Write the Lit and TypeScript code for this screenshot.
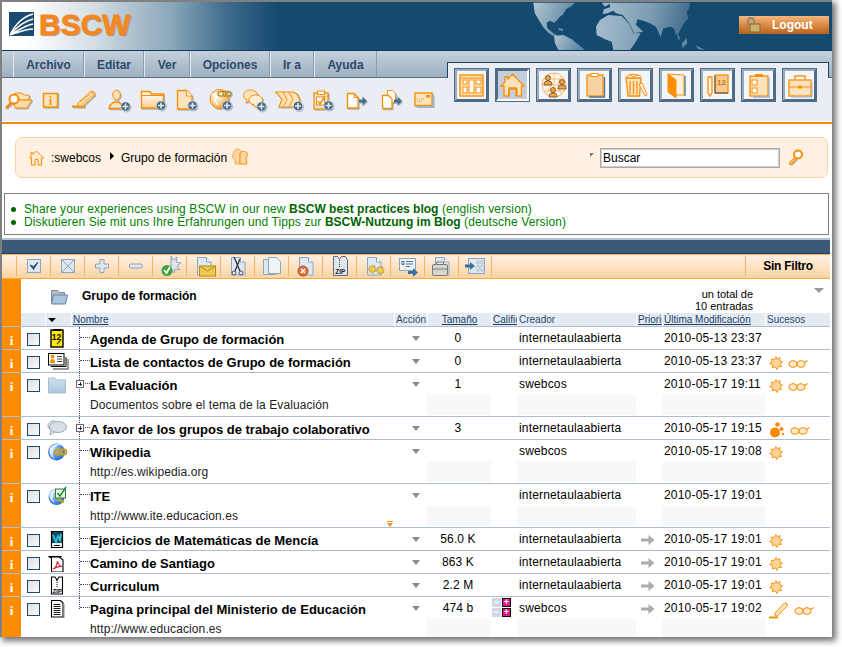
import {LitElement, css, html, svg} from 'lit';
import {customElement} from 'lit/decorators.js';

const O = '#f98f06';
const C = '#fde3bd';
const B = '#8ea4bc';
const P = '#dfe7f0';

const ic = (w: number, h: number, body: unknown) =>
  html`<svg width=${w} height=${h} viewBox="0 0 ${w} ${h}">${body}</svg>`;

const plus = (x: number, y: number) => svg`
  <circle cx=${x} cy=${y} r="4.6" fill="#46677f" stroke="#dbe3ec" stroke-width=".6"/>
  <path d="M${x - 3} ${y}h6M${x} ${y - 3}v6" stroke="#dfe8f0" stroke-width="1.6"/>`;

const arrow = (x: number, y: number) => svg`
  <path d="M${x} ${y - 1.5}h3.5v-3l4.5 4.5-4.5 4.5v-3h-3.5z" fill="#4a7088"/>`;

const chain = (x: number, y: number) => svg`
  <g fill="none" stroke="#b8942a" stroke-width="1.5">
    <rect x=${x} y=${y} width="8" height="4.5" rx="2.2"/>
    <rect x=${x + 5} y=${y} width="8" height="4.5" rx="2.2"/>
  </g>`;

const star = (c: string, f: string) => svg`
  <path d="M6.500 0l1.300 2.500L10.500 1l-.4 3L13 5.500l-2.400 1.600L12 10l-3-.2L7.500 13 5.800 10.300 2.800 11.500l.3-3.200L0 7l2.700-1.500L1.800 2.600l3 .4z" fill=${f} stroke=${c} stroke-width=".9"/>`;

const topIcons = [
  svg`<path d="M13 5h7l2 2h5v5H13z" fill=${C} stroke=${O}/>
    <path d="M11 12h19l-5 8H13z" fill="#fbd9a8" stroke=${O}/>
    <path d="M9 15l-5 5" stroke=${O} stroke-width="2.600"/>
    <circle cx="12" cy="11" r="4.500" fill="#fff" stroke=${O} stroke-width="2"/>`,
  svg`<rect x="7.500" y="5.500" width="14" height="13.500" fill=${C} stroke=${O} stroke-width="1.500"/>
    <text x="14.500" y="16.500" font-family="Liberation Serif" font-weight="700" font-size="12" text-anchor="middle" fill=${O}>i</text>`,
  svg`<path d="M8 15L21 3l3 1 1 3-13 12H8z" fill=${C} stroke=${O}/>
    <path d="M10 14L23 4M11 17L24 6" stroke=${O} stroke-width=".8"/>
    <path d="M2 18.500h13" stroke=${O} stroke-width="2"/>`,
  svg`<ellipse cx="12.500" cy="7" rx="3.800" ry="4.800" fill=${C} stroke=${O}/>
    <path d="M5 20.500c0-4 3-4.500 5-6.500h5c1 3 5 2 5 6.500z" fill=${C} stroke=${O} stroke-width="1.300"/>${plus(21.5, 18.5)}`,
  svg`<path d="M3.500 6V3.500h8l2 2.500h12v14h-22z" fill="url(#fg)" stroke=${O} stroke-width="1.300"/>
    <path d="M3.500 7.500h22" stroke=${O}/>${plus(23, 17.5)}`,
  svg`<path d="M5.500 2.500h9l5.500 5.500v13H5.500z" fill=${C} stroke=${O} stroke-width="1.300"/>
    <path d="M14.500 2.500V8H20" fill="#fff" stroke=${O}/>${plus(20.5, 17.5)}`,
  svg`<circle cx="13.500" cy="11" r="9.500" fill="url(#gl)" stroke=${O}/>
    <path d="M6 6l5 2-2 5 3 4M17 3l-2 5" stroke="#fff" stroke-width="1.500" fill="none"/>
    ${chain(12, 3.5)}${plus(21, 17.5)}`,
  svg`<path d="M10.500 2C6 2 3.500 4.500 3.500 7.500c0 2 1.500 3.500 3 4.200L6 15l4-2.700c4 0 7.500-2 7.500-4.800S15 2 10.500 2z" fill=${C} stroke=${O}/>
    <path d="M15.500 7C11.500 7 9 9.500 9 12c0 2.500 2 4.500 5 4.700l2 3.300 1.500-3c3.500-.5 5-2.500 5-5 0-2.800-3-5-7-5z" fill="#feecd4" stroke=${O}/>${plus(21.5, 18.5)}`,
  svg`<path d="M2 4h17l4 2 3 6-3 7H5l3-7.500z" fill=${C} stroke=${O} stroke-width="1.200"/>
    <path d="M9 4l4 7.500-4 7.500M15 4l4 7.500-4 7.500" fill="none" stroke=${O}/>${plus(24, 18)}`,
  svg`<rect x="6" y="5" width="14" height="16" fill=${C} stroke=${O} stroke-width="1.300"/>
    <rect x="9.500" y="3" width="7" height="3.500" fill="#fff" stroke=${O}/>
    <rect x="8.500" y="9" width="8" height="8" fill="#fff" stroke="#c98a3a"/>
    <path d="M10 13l2 3 5-8" fill="none" stroke=${O} stroke-width="1.600"/>${plus(20.5, 17.5)}`,
  svg`<path d="M5.500 5.500h6.500l4 4v10.500H5.500z" fill="#fff" stroke=${O} stroke-width="1.300"/>
    <path d="M12 5.500v4h4" fill="none" stroke=${O}/>${arrow(17, 13)}`,
  svg`<path d="M11.500 2.500h5l3 3v9h-8z" fill="#fff" stroke=${O}/>
    <path d="M6.500 7.500h6l3.500 3.500v9.500H6.500z" fill="#fff" stroke=${O} stroke-width="1.300"/>${arrow(18, 13)}`,
  svg`<rect x="5" y="5" width="17" height="12.500" fill=${C} stroke=${O} stroke-width="1.400"/>
    <rect x="16" y="7" width="4" height="2.500" fill=${O}/>
    <path d="M7 11h8M7 13.500h6" stroke="#e0a050" stroke-dasharray="1 1"/>
    <path d="M6 18.500h17V7" fill="none" stroke="#9fb0c4" stroke-width="1.200"/>`,
];

const tabs = [
  svg`<rect x="2" y="3" width="23" height="21" fill=${C} stroke=${O} stroke-width="1.400"/>
    <path d="M2 6h23" stroke=${O}/>
    <g fill="#fff" stroke=${O}><rect x="5" y="8" width="4" height="4"/><rect x="5" y="15" width="4" height="6"/><rect x="11" y="8" width="5" height="13"/><rect x="18" y="8" width="5" height="4"/><rect x="18" y="15" width="5" height="6"/></g>`,
  svg`<path d="M13.500 2L25 14h-2.500v10H18v-7H10v7H5V14H2l4-4V5h3v2z" fill=${C} stroke=${O} stroke-width="1.300"/>
    <path d="M10 24v-8h7v8" fill="none" stroke=${O} stroke-width="1.500"/>`,
  svg`<circle cx="14" cy="13" r="12" fill="#fef4e6" stroke="#f5b66e"/>
    <path d="M2 13h24M14 1v24M6 4c5 6 5 13 0 18M22 4c-5 6-5 13 0 18M4 7h20M4 19h20" fill="none" stroke="#f5b66e" stroke-width=".8"/>
    <g fill="#f4a24a" stroke="#6a4a20" stroke-width=".8">
      <circle cx="8" cy="6" r="2.500"/><path d="M4 13c0-3 1-4 4-4s4 1 4 4z"/>
      <circle cx="22" cy="10" r="2.500"/><path d="M18 17c0-3 1-4 4-4s4 1 4 4z"/>
      <circle cx="13" cy="18" r="2.500"/><path d="M9 25c0-3 1-4 4-4s4 1 4 4z"/>
    </g>`,
  svg`<rect x="6" y="3" width="16" height="21" fill="#f7d3a4" stroke=${O} stroke-width="1.300"/>
    <rect x="10" y="1.500" width="7" height="3" fill="#fff" stroke=${O}/>
    <path d="M23.500 5v20H8" fill="none" stroke="#53708c" stroke-width="1.300"/>`,
  svg`<path d="M4 6h15l-1.500 18H6z" fill=${C} stroke=${O} stroke-width="1.300"/>
    <path d="M8 9v13M11.500 9v13M15 9v13" stroke=${O} stroke-width="1.300"/>
    <path d="M4 5l6-3 9 2M7 2l5 3 4-3" fill="#fff" stroke=${O}/>
    <path d="M17 12l6 12 2-1-5-12z" fill="#fff" stroke=${O}/>`,
  svg`<path d="M5 2l16 1v20H10z" fill="#fdf0dd" stroke=${O}/>
    <path d="M5 2l8 6v18l-8-6z" fill=${O} stroke=${O}/>
    <path d="M22 4v20" stroke="#53708c" stroke-width="1.300"/>`,
  svg`<path d="M4 5h4v16l-2 3-2-3z" fill="#fdf0dd" stroke=${O} stroke-width="1.300"/>
    <rect x="11" y="3" width="13" height="18" fill="#f6c98e" stroke=${O} stroke-width="1.300"/>
    <text x="17.500" y="13" font-family="Liberation Sans" font-weight="700" font-size="8" text-anchor="middle" fill="#c9741a">12</text>
    <path d="M11 4v17h13" fill="none" stroke="#3a4a58" stroke-width="1"/>`,
  svg`<rect x="5" y="4" width="18" height="20" fill=${C} stroke=${O} stroke-width="1.300"/>
    <rect x="10" y="2" width="8" height="3" fill=${O}/>
    <g fill="#fff" stroke=${O}><rect x="7" y="8" width="5" height="5"/><rect x="7" y="16" width="5" height="5"/></g>
    <path d="M24 6v19H8" fill="none" stroke="#9fb0c4" stroke-width="1.300"/>`,
  svg`<rect x="3" y="8" width="22" height="16" fill=${C} stroke=${O} stroke-width="1.300"/>
    <path d="M9 8V4h10v4" fill="none" stroke=${O} stroke-width="1.300"/>
    <path d="M3 15h22" stroke=${O}/><rect x="12" y="13.500" width="4" height="3" fill=${O}/>
    <path d="M26 10v15H5" fill="none" stroke="#9fb0c4" stroke-width="1"/>`,
];

const bdoc = svg`<path d="M5.500 2.500h9l4.500 4.500v13H5.500z" fill=${P} stroke=${B}/><path d="M14.500 2.500V7H19" fill="#fff" stroke=${B}/>`;

const tools = [
  svg`<rect x="5.500" y="4.500" width="13" height="13" fill=${P} stroke=${B}/>
    <path d="M8 10l3.500 4.500L16 7l-4.500 4.500z" fill="#2f5878" stroke="#2f5878"/>`,
  svg`<rect x="5.500" y="4.500" width="13" height="13" fill=${P} stroke=${B}/>
    <path d="M6 5l12 12M18 5L6 17" stroke=${B}/>`,
  svg`<path d="M10 4.500h4V9h4.500v4H14v4.500h-4V13H5.500V9H10z" fill=${P} stroke=${B}/>`,
  svg`<rect x="5.500" y="9" width="12.500" height="4" rx="1" fill=${P} stroke=${B}/>`,
  svg`<path d="M13 1l2 4 4-3-1 5 5 1-4 3 3 4-5-1-1 4-3-4z" fill=${P} stroke=${B}/>
    <circle cx="9" cy="15.500" r="5.500" fill="#3da244"/><path d="M6 15l2.500 3L12 12" fill="none" stroke="#fff" stroke-width="1.800"/>`,
  svg`${bdoc}<rect x="7.500" y="11" width="16" height="10" fill="#f1c94c" stroke="#b08c20"/><path d="M7.500 11l8 5 8-5" fill="none" stroke="#b08c20"/>`,
  svg`${bdoc}<path d="M8 2l6 14M14 4L9 16" stroke="#334" stroke-width="1.300"/><circle cx="8" cy="18" r="2" fill="none" stroke="#556"/><circle cx="15" cy="18" r="2" fill="none" stroke="#556"/>`,
  svg`<path d="M3.500 4.500h9l3 3v12h-12z" fill=${P} stroke=${B}/><path d="M8.500 2.500h8l4 4v12h-12z" fill="#eef3f8" stroke=${B}/>`,
  svg`${bdoc}<circle cx="9" cy="16" r="5" fill="#e8743c" stroke="#a04a20"/><path d="M7 14l4 4M11 14l-4 4" stroke="#fff" stroke-width="1.500"/>`,
  svg`<path d="M5.500 1.500h4l2 3 2-3h4l2 3.500v15.500h-14z" fill=${P} stroke="#667"/>
    <path d="M11.500 5v7" stroke="#445" stroke-dasharray="1 1"/>
    <text x="12.300" y="19" font-family="Liberation Sans" font-weight="700" font-size="6.500" text-anchor="middle" fill="#223">ZIP</text>`,
  svg`${bdoc}<g transform="translate(6 10) scale(.65)">${star('#a8861a', '#f3cf4a')}</g><g transform="translate(14 11) scale(.65)">${star('#a8861a', '#f3cf4a')}</g>`,
  svg`<rect x="3.500" y="3.500" width="16" height="12" fill="#eef3f8" stroke=${B}/>
    <path d="M10 6.500h7M10 9h7M10 11.500h4M6 6.500h2v3H6z" stroke="#53708c" fill="none"/>
    <path d="M12 16h5v-3l5 4.500-5 4.500v-3h-5z" fill="#3f6f96"/>`,
  svg`${bdoc}<rect x="2.500" y="9.500" width="15" height="11" rx="1.500" fill="#d8d8d0" stroke="#7a7a70"/><path d="M6.500 9.500V7h7v2.500M3 14h14" fill="none" stroke="#7a7a70"/>`,
  svg`<rect x="5.500" y="3.500" width="16" height="15" fill=${P} stroke=${B}/>
    <path d="M14 6h2v3h-2zM18 6h2v3h-2zM14 11h2v5h-2zM18 11h2v5h-2z" fill="#fff" stroke=${B} stroke-width=".7"/>
    <path d="M2 9.500h5V7l5 4-5 4v-2.500H2z" fill="#3f6f96"/>`,
];

const rowIcon: Record<string, unknown> = {
  agenda: svg`<rect x="4" y="1" width="12" height="17" fill="#ffe800" stroke="#000" stroke-width="1.400"/>
    <rect x="6" y="0" width="8" height="2" fill="#000"/>
    <text x="9.500" y="11" font-family="Liberation Sans" font-weight="700" font-size="8.500" text-anchor="middle" fill="#000">12</text>
    <path d="M10 15l4-4" stroke="#555" stroke-width="1.400"/>`,
  contacts: svg`<path d="M4 14.500h15V5" fill="none" stroke="#000"/><path d="M6 17h15V7" fill="none" stroke="#777" stroke-width="1.400"/>
    <rect x="1.500" y="1.500" width="15.500" height="11.500" fill="#fff" stroke="#000"/>
    <circle cx="5.500" cy="4.500" r="2" fill=${O}/><path d="M3 11c0-3 1-4 2.500-4S8 8 8 11z" fill=${O}/>
    <path d="M10 4.500h5M10 7h5M10 9.500h5" stroke="#444"/>`,
  folder: svg`<path d="M1.500 3h6l2 2h9v13h-17z" fill="url(#bf)" stroke="#a9bccd"/>`,
  chat: svg`<path d="M8 1.500C4 1.500 1 4 1 7c0 2 1.500 3.500 3 4.500L3 16l5-3.500c1 .3 6 .3 7 0" fill="#e8edf2" stroke="#9aabbb"/>
    <ellipse cx="11" cy="8" rx="8.500" ry="5.500" fill="#d7dfe7" stroke="#9aabbb"/>`,
  link: svg`<circle cx="9.500" cy="10" r="8.500" fill="url(#bg)"/><path d="M3 6c4-5 10-5 13-2-5-2-9 1-10 5-1 3 0 6 2 8-3-1-7-6-5-11z" fill="#fff" opacity=".8"/>
    <g fill="none" stroke="#c8a028" stroke-width="1.800"><rect x="8" y="7.500" width="7" height="5" rx="2.500"/><rect x="12.500" y="7.500" width="7" height="5" rx="2.500"/></g>`,
  linkok: svg`<circle cx="9.500" cy="11" r="8" fill="url(#bg)"/><path d="M3 7c4-5 9-5 12-3-5-1-8 2-9 5-1 3 0 6 2 8-3-1-7-6-5-10z" fill="#fff" opacity=".8"/>
    <path d="M10 13l7 3" stroke="#c8a028" stroke-width="2.500"/>
    <rect x="8.500" y="3" width="10" height="9" fill="#e8f4e0" stroke="#2f7d4a"/><path d="M10.500 7l2.500 3 6-9" fill="none" stroke="#1b8a3a" stroke-width="1.400"/>`,
  math: svg`<path d="M4.500 1.500h11v16h-11z" fill="#fff" stroke="#000" stroke-width="1.200"/>
    <path d="M5 2h10v11H5z" fill="#0c4a5e"/><path d="M6 5l3 7 2-6 2 4 1-6" fill="none" stroke="#2fc6d8" stroke-width="1.800"/>
    <path d="M7 15.500h6" stroke="#000"/>`,
  pdf: svg`<path d="M1.500 3.500h13l-1 1H3z" fill="#fff" stroke="#000"/><path d="M4.500 4h8l3.500 3v12H4.500z" fill="#fff" stroke="#000" stroke-width="1.100"/>
    <path d="M6 16c3-1 4-4 4.500-8 .5 3 2 5 4.500 5.500-3-.5-6 .5-9 2.500z" fill="none" stroke="#d8222a" stroke-width="1.200"/>`,
  zip: svg`<path d="M4.500 1h3.500l2 3 2-3h3.500v17h-11z" fill="#fff" stroke="#000" stroke-width="1.100"/>
    <path d="M10 4v7" stroke="#000" stroke-dasharray="1 1"/>
    <text x="10.300" y="17" font-family="Liberation Sans" font-weight="700" font-size="6" text-anchor="middle" fill="#000">ZIP</text>`,
  doc: svg`<path d="M4.500 1.500h9l2.500 2.500v14H4.500z" fill="#fff" stroke="#000" stroke-width="1.100"/><path d="M17 5v14H6" fill="none" stroke="#888"/>
    <path d="M6.500 5.500h7M6.500 7.500h7M6.500 9.500h7M6.500 11.500h7M6.500 13.500h7M6.500 15.500h7" stroke="#000" stroke-width=".9"/>`,
};

const sun = ic(14, 14, svg`<g transform="translate(.5 .5)">${star(O, '#fcd49a')}</g>`);
const glasses = ic(21, 9, svg`<g fill="#fde9cf" stroke=${O} stroke-width="1.100"><ellipse cx="5" cy="5" rx="4" ry="3.200"/><ellipse cx="13" cy="5" rx="4" ry="3.200"/></g><path d="M16.500 3.500l3-2" stroke=${O} stroke-width="1.100" fill="none"/>`);
const blob = ic(16, 16, svg`<g fill="#f98a00"><circle cx="6" cy="10.500" r="5"/><circle cx="12.500" cy="7" r="2"/><circle cx="8.500" cy="2.500" r="2.300"/><circle cx="14" cy="12" r="1.200"/></g>`);
const pencil = ic(20, 18, svg`<path d="M6 12L16 1.500l3 2.500L8.500 15H6z" fill="#fde3bd" stroke=${O}/><path d="M0 16.500h9" stroke=${O} stroke-width="2"/>`);
const gray = ic(14, 10, svg`<path d="M0 3.500h7.500V0L13.500 5l-6 5V6.500H0z" fill="#aaa"/>`);

interface Row {
  icon: string;
  name: string;
  size?: string;
  creator: string;
  date: string;
  sub?: string;
  prio?: boolean;
  plus?: boolean;
  rate?: boolean;
  events: unknown[];
  last?: boolean;
  mark?: boolean;
}

const U = 'internetaulaabierta';
const rows: Row[] = [
  {icon: 'agenda', name: 'Agenda de Grupo de formación', size: '0', creator: U, date: '2010-05-13 23:37', events: []},
  {icon: 'contacts', name: 'Lista de contactos de Grupo de formación', size: '0', creator: U, date: '2010-05-13 23:37', events: [sun, glasses]},
  {icon: 'folder', name: 'La Evaluación', size: '1', creator: 'swebcos', date: '2010-05-17 19:11', sub: 'Documentos sobre el tema de la Evaluación', plus: true, events: [sun, glasses]},
  {icon: 'chat', name: 'A favor de los grupos de trabajo colaborativo', size: '3', creator: U, date: '2010-05-17 19:15', plus: true, events: [blob, glasses]},
  {icon: 'link', name: 'Wikipedia', creator: 'swebcos', date: '2010-05-17 19:08', sub: 'http://es.wikipedia.org', events: [sun]},
  {icon: 'linkok', name: 'ITE', creator: U, date: '2010-05-17 19:01', sub: 'http://www.ite.educacion.es', mark: true, events: []},
  {icon: 'math', name: 'Ejercicios de Matemáticas de Mencía', size: '56.0 K', creator: U, date: '2010-05-17 19:01', prio: true, events: [sun]},
  {icon: 'pdf', name: 'Camino de Santiago', size: '863 K', creator: U, date: '2010-05-17 19:01', prio: true, events: [sun]},
  {icon: 'zip', name: 'Curriculum', size: '2.2 M', creator: U, date: '2010-05-17 19:01', prio: true, events: [sun]},
  {icon: 'doc', name: 'Pagina principal del Ministerio de Educación', size: '474 b', creator: 'swebcos', date: '2010-05-17 19:02', sub: 'http://www.educacion.es', prio: true, rate: true, last: true, events: [pencil, glasses]},
];

@customElement('app-root')
export class AppRoot extends LitElement {
  static styles = css`
    :host {
      display: block;
      width: 842px;
      height: 647px;
      overflow: hidden;
      background: #fff;
      font-family: 'Liberation Sans', Arial, sans-serif;
      font-size: 12px;
      color: #000;
    }
    .win {
      box-sizing: border-box;
      width: 832px;
      height: 637px;
      overflow: hidden;
      background: #fff;
      border-left: 2px solid #808080;
      border-top: 2px solid #808080;
      box-shadow: 3px 3px 6px 1px rgba(0, 0, 0, .55);
    }
    .defs { position: absolute; width: 0; height: 0; }
    svg { display: block; flex: none; }

    .header {
      display: flex;
      height: 48px;
      background: linear-gradient(90deg, #fff 0, #fff 25px, #d5dfe5 90px, #8aa8ba 168px, #3f6c8c 225px, #154a70 275px);
      border-bottom: 1px solid #0f3a5c;
    }
    .logo { display: flex; flex: none; width: 121px; margin: 10px 0 0 7px; height: 30px; }
    .word {
      margin: -3px 0 0 5px;
      font-size: 30px;
      line-height: 32px;
      font-weight: 700;
      color: #f5871f;
      -webkit-text-stroke: .8px #f5871f;
      text-shadow: 1px 1px 1px rgba(40, 60, 80, .45);
    }
    .map { margin-left: 400px; }
    .logout {
      display: flex;
      align-items: center;
      box-sizing: border-box;
      width: 90px;
      height: 18px;
      margin: 14px 3px 0 auto;
      padding-left: 6px;
      gap: 11px;
      background: linear-gradient(#f5b67c, #cf7a30 70%, #b9651f);
      color: #fff;
      font-size: 12px;
      font-weight: 700;
    }

    .nav {
      display: flex;
      height: 70px;
      background: linear-gradient(#c4d0dc, #9fb0c1 26px, #5a6f84 26px, #5a6f84 27px, #eaedf3 27px);
    }
    .left { width: 445px; }
    .menu { display: flex; height: 26px; padding-left: 11px; }
    .menu span {
      box-sizing: border-box;
      display: flex;
      align-items: center;
      justify-content: center;
      padding-top: 1px;
      border-left: 1px solid #e4e9ef;
      border-right: 1px solid #8a9cae;
      font-weight: 700;
      color: #2b4a6c;
    }
    .ticons { display: flex; margin: 11px 0 0 -2px; }
    .ticons span { width: 34px; display: flex; justify-content: center; }
    .ticons svg { filter: drop-shadow(1px 1px 0 #a5b5c8); }

    .panel {
      position: relative;
      display: flex;
      gap: 6px;
      box-sizing: border-box;
      width: 382px;
      height: 59px;
      margin-top: 11px;
      padding: 5px 0 0 7px;
      background: #eaedf3;
      border-top: 1px solid #1f4564;
    }
    .panel::before,
    .panel::after {
      content: '';
      position: absolute;
      top: 0;
      height: 15px;
      border-left: 1px solid #1f4564;
    }
    .panel::before { left: 0; }
    .panel::after { right: 0; }
    .tab {
      box-sizing: border-box;
      display: flex;
      align-items: center;
      justify-content: center;
      width: 35px;
      height: 34px;
      background: #f3f6fd;
      border: 3px solid;
      border-color: #9aabbd #4f6b86 #4f6b86 #9aabbd;
      outline: 1px solid #4f6b86;
      outline-offset: -1px;
    }
    .tab.on {
      background: #c3cfdd;
      border-color: #4f6b86 #fff #fff #4f6b86;
    }

    .rule { height: 2px; margin-top: 1px; background: #f08a00; }

    .crumb {
      display: flex;
      align-items: center;
      box-sizing: border-box;
      height: 41px;
      margin: 13px 4px 0 13px;
      padding-left: 13px;
      background: #fef1e1;
      border: 1px solid #fcd3a6;
      border-radius: 7px;
    }
    .crumb .sw { margin-left: 7px; }
    .crumb .tri {
      width: 0;
      height: 0;
      margin: -4px 7px 0 9px;
      border-left: 4px solid #000;
      border-top: 4px solid transparent;
      border-bottom: 4px solid transparent;
    }
    .crumb .ppl { margin-left: 4px; }
    .search { display: flex; align-items: center; margin-left: auto; margin-right: 23px; }
    .corner {
      width: 0;
      height: 0;
      margin: -6px 6px 0 0;
      border-top: 4px solid #777;
      border-right: 4px solid transparent;
    }
    .search input {
      box-sizing: border-box;
      width: 180px;
      height: 20px;
      margin: 0 7px 0 0;
      padding: 0 2px;
      border: 1px solid #aaa;
      outline: 0;
      box-shadow: inset 0 0 0 1px #ccc;
      background: #fff;
      font: 12px 'Liberation Sans', Arial, sans-serif;
      color: #000;
    }

    .notice {
      box-sizing: border-box;
      height: 42px;
      margin: 15px 3px 0 2px;
      padding: 9px 0 0 6px;
      border: 1px solid #808080;
      color: #008000;
      line-height: 13px;
      letter-spacing: .11px;
    }
    .notice div { display: flex; white-space: pre; }
    .notice i {
      flex: none;
      width: 5px;
      height: 5px;
      margin: 4px 8px 0 0;
      border-radius: 50%;
      background: #006400;
    }
    .notice b { color: #006400; letter-spacing: 0; }

    .bar {
      box-sizing: border-box;
      width: 828px;
      height: 16px;
      margin-top: 3px;
      background: #3b5a78;
      border-top: 2px solid #b5c2d1;
      border-bottom: 1px solid #2a4058;
    }
    .tools {
      display: flex;
      box-sizing: border-box;
      width: 828px;
      height: 25px;
      padding: 1px 0 2px 14px;
      border-top: 1px solid #fbb066;
      border-bottom: 1px solid #f9a640;
      background: linear-gradient(#fff1e2, #fdd3a2);
    }
    .tools span {
      box-sizing: border-box;
      width: 34px;
      display: flex;
      align-items: center;
      justify-content: center;
      border-left: 1px solid #fbb066;
    }
    .tools span:nth-last-child(2) { border-right: 1px solid #fbb066; }
    .tools .filter {
      width: 85px;
      margin-left: auto;
      font-weight: 700;
      letter-spacing: -.25px;
    }

    .group { display: flex; width: 828px; height: 34px; }
    .orange { width: 19px; background: #ff8c00; flex: none; }
    .group .gi { margin: 10px 0 0 29px; }
    .group b { margin: 10px 0 0 14px; line-height: 14px; }
    .total { margin: 9px 0 0 auto; text-align: right; font-size: 11px; line-height: 12px; }
    .down {
      width: 0;
      height: 0;
      margin: 9px 6px 0 61px;
      border-left: 5px solid transparent;
      border-right: 5px solid transparent;
      border-top: 5px solid #999;
    }

    .thead {
      display: grid;
      grid-template-columns: 19px 24px 26px 323px 33px 64px 26px 119px 26px 103px 65px;
      width: 828px;
      height: 13px;
      font-size: 10px;
      line-height: 13px;
      color: #2b4a6c;
    }
    .thead > div {
      box-sizing: border-box;
      overflow: hidden;
      white-space: nowrap;
      background: #e3eaf1;
      border-left: 1px solid #fff;
      padding-left: 1px;
    }
    .thead > .orange { border: 0; padding: 0; background: #ff8c00; }
    .thead > .blank { border: 0; }
    .thead .mid { text-align: center; padding: 0; }
    .thead u { color: #20406a; }
    .sort {
      width: 0;
      height: 0;
      margin: 5px 0 0 1px;
      border-left: 4px solid transparent;
      border-right: 4px solid transparent;
      border-top: 4px solid #000;
    }

    .row {
      display: grid;
      grid-template-columns: 19px 24px 34px 11px 306px 31px 64px 26px 119px 26px 103px 65px;
      grid-auto-rows: 22px;
      width: 828px;
      border-top: 1px solid #b0bcd4;
      line-height: 22px;
    }
    .row.two { grid-template-rows: 22px 21px; }
    .info {
      grid-row: span 2;
      background: #ff8c00;
      color: #fff;
      font: 700 13px/28px 'Liberation Serif', serif;
      text-align: center;
    }
    .one .info, .one .chk, .one .ic, .one .tree { grid-row: span 1; }
    .chk { grid-row: span 2; padding: 6px 0 0 6px; }
    .chk i {
      display: block;
      box-sizing: border-box;
      width: 13px;
      height: 13px;
      border: 1px solid #1d4a70;
      background: linear-gradient(135deg, #dedede, #fbfbfb);
    }
    .ic { grid-row: span 2; padding: 2px 0 0 2px; }
    .tree {
      grid-row: span 2;
      position: relative;
      box-sizing: border-box;
      border-left: 1px dotted #405070;
    }
    .tree.end { align-self: start; height: 12px; }
    .tree::after {
      content: '';
      position: absolute;
      left: 0;
      top: 10px;
      width: 10px;
      border-top: 1px dotted #405070;
    }
    .exp {
      position: absolute;
      left: -4px;
      top: 7px;
      z-index: 1;
      box-sizing: border-box;
      width: 8px;
      height: 8px;
      background:
        linear-gradient(#333, #333) center / 4px 1px no-repeat,
        linear-gradient(#333, #333) center / 1px 4px no-repeat,
        #fff;
      border: 1px solid #667;
    }
    .name {
      font-size: 13px;
      font-weight: 700;
      line-height: 25px;
      white-space: nowrap;
    }
    .act {
      width: 0;
      height: 0;
      margin: 9px 0 0 16px;
      border-left: 4.500px solid transparent;
      border-right: 4.500px solid transparent;
      border-top: 5px solid #8a8a8a;
    }
    .size { text-align: center; padding-right: 2px; letter-spacing: .1px; }
    .who { padding-left: 2px; letter-spacing: .16px; }
    .prio { padding: 7px 0 0 5px; }
    .date { padding-left: 2px; white-space: nowrap; letter-spacing: .19px; }
    .ev { display: flex; align-items: center; gap: 5px; padding: 4px 0 0 4px; }
    .desc { grid-column: 5; line-height: 21px; color: #222; white-space: nowrap; position: relative; letter-spacing: .1px; }
    .grey { background: #f7f8fa; height: 20px; }
    .mark {
      position: absolute;
      left: 297px;
      bottom: 0;
      width: 0;
      height: 0;
      border-left: 3px solid transparent;
      border-right: 3px solid transparent;
      border-top: 4px solid #ff9000;
    }
    .mark::before {
      content: '';
      position: absolute;
      left: -3px;
      top: -6px;
      width: 6px;
      height: 1px;
      background: #ff9000;
    }
    .rate {
      display: grid;
      grid-template-columns: 9px 9px;
      gap: 1px;
      margin: 1px 0 0 1px;
      height: 19px;
      font: 700 9px/9px 'Liberation Sans', sans-serif;
      text-align: center;
    }
    .rate i { font-style: normal; height: 9px; background: #cfd8e4; color: #fff; }
    .rate i.p { background: #e0188c; box-sizing: border-box; border: 1px solid #000; line-height: 7px; }
  `;

  private menu: [string, number][] = [['Archivo', 71], ['Editar', 60], ['Ver', 46], ['Opciones', 80], ['Ir a', 44], ['Ayuda', 63]];

  private renderRow(r: Row) {
    const two = !!r.sub;
    return html`
      <div class="row ${two ? 'two' : 'one'}">
        <div class="info">i</div>
        <div class="chk"><i></i></div>
        <div class="ic">${ic(22, 19, rowIcon[r.icon])}</div>
        <div class="tree ${r.last ? 'end' : ''}">${r.plus ? html`<span class="exp"></span>` : ''}</div>
        <div class="name">${r.name}</div>
        <div><div class="act"></div></div>
        <div class="size">${r.size ?? ''}</div>
        <div>${r.rate ? html`<div class="rate"><i>−</i><i class="p">+</i><i>−</i><i class="p">+</i></div>` : ''}</div>
        <div class="who">${r.creator}</div>
        <div class="prio">${r.prio ? gray : ''}</div>
        <div class="date">${r.date}</div>
        <div class="ev">${r.events}</div>
        ${two ? html`
          <div class="desc">${r.sub}${r.mark ? html`<span class="mark"></span>` : ''}</div>
          <div></div><div class="grey"></div><div></div><div class="grey"></div><div></div><div class="grey"></div><div></div>` : ''}
      </div>`;
  }

  render() {
    return html`
      <div class="win">
        <svg class="defs">
          <defs>
            <linearGradient id="fg" x1="0" y1="0" x2="0" y2="1"><stop offset="0" stop-color="#fff"/><stop offset="1" stop-color="#fbcf94"/></linearGradient>
            <radialGradient id="gl" cx=".35" cy=".35" r=".8"><stop offset="0" stop-color="#fff"/><stop offset=".6" stop-color="#fbc27a"/><stop offset="1" stop-color="#f08a10"/></radialGradient>
            <linearGradient id="bf" x1="0" y1="0" x2="0" y2="1"><stop offset="0" stop-color="#d5e3ef"/><stop offset="1" stop-color="#a8c4dc"/></linearGradient>
            <radialGradient id="bg" cx=".4" cy=".4" r=".7"><stop offset="0" stop-color="#a8d4fa"/><stop offset="1" stop-color="#0c5ac8"/></radialGradient>
            <linearGradient id="m1" x1="0" y1="0" x2="1" y2=".3"><stop offset="0" stop-color="#b2c5d2"/><stop offset="1" stop-color="#5d87a3"/></linearGradient>
            <linearGradient id="m2" gradientUnits="userSpaceOnUse" x1="200" y1="0" x2="490" y2="60"><stop offset="0" stop-color="#a9c0cf"/><stop offset=".55" stop-color="#7e9eb4"/><stop offset="1" stop-color="#3c6887"/></linearGradient>
          </defs>
        </svg>

        <div class="header">
          <div class="logo">
            <svg width="25" height="24" viewBox="0 0 25 24">
              <rect width="25" height="24" fill="#1a4a70"/>
              <path d="M1 23C6 13 13 5 24 2M1 23C8 15 15 9 24 7M1 23C10 18 17 13 24 12M1 23c9-3 16-6 23-6" fill="none" stroke="#fff" stroke-width="1.500"/>
            </svg>
            <div class="word">BSCW</div>
          </div>
          <svg class="map" width="180" height="48" viewBox="0 6 540 144">
            <path d="M10 8H135L125 18 108 28 100 42 88 52 80 62 72 68 60 62 50 68 52 85 70 100 85 108H70L55 98 40 82 25 58 14 38z" fill="url(#m1)"/>
            <path d="M85 85l15 3-2 4-12-2z" fill="#7d9fb6"/>
            <path d="M72 108l28-3 25 13 40 32H85L75 130z" fill="url(#m1)"/>
            <path d="M215 8h30l-20 12z" fill="#9db6c7"/>
            <path d="M240 8H480L478 25 470 35 475 55 462 70 445 100 438 105 432 85 420 80 400 85 392 112 378 80 360 70 340 62 322 58 318 75 340 95 312 100 298 70 278 45 258 40 250 32 232 40 218 42 222 28 240 22z" fill="url(#m2)"/>
            <path d="M235 45l40 3 23 24 12 28h22l-17 30-15 20H250l-5-25-20-7-25-13-2-25 12-20z" fill="url(#m2)"/>
            <path d="M440 95l10 20-5 5zM455 130l15-15 2 15-14 15zM495 135l20 10 10 5-20-2z" fill="#5d87a3"/>
          </svg>
          <div class="logout">
            <svg width="16" height="16" viewBox="0 0 16 16">
              <path d="M3 9V4c0-2 1-3 3-3s3 1 3 3v2" fill="none" stroke="#8a8a80" stroke-width="1.800"/>
              <rect x="5" y="7" width="10" height="8" fill="#d2b06a" stroke="#7a6a40"/>
            </svg>
            Logout
          </div>
        </div>

        <div class="nav">
          <div class="left">
            <div class="menu">
              ${this.menu.map(([t, w]) => html`<span style="width:${w}px">${t}</span>`)}
            </div>
            <div class="ticons">
              ${topIcons.map(i => html`<span>${ic(30, 24, i)}</span>`)}
            </div>
          </div>
          <div class="panel">
            ${tabs.map((t, i) => html`<div class="tab ${i === 1 ? 'on' : ''}">${ic(27, 26, t)}</div>`)}
          </div>
        </div>
        <div class="rule"></div>

        <div class="crumb">
          <svg width="15" height="16" viewBox="0 0 15 16"><path d="M7.500 1L14.500 8H12.500V15H9V9.500H6V15H2.500V8H.5L2 6.500V2.500H4V4.500z" fill="#fdebd2" stroke=${O}/></svg>
          <span class="sw">:swebcos</span>
          <span class="tri"></span>
          <span>Grupo de formación</span>
          <svg class="ppl" width="18" height="19" viewBox="0 0 18 19">
            <path d="M3 4c0-2 2-3 4-3s3 1 4 3v6H9v6H4v-4L1 9z" fill="#fbd6a4" stroke="#f5a850"/>
            <path d="M9 5c1-2 6-2 7 0 1 2 0 4-1 5l1 6H9z" fill="#fbd6a4" stroke=${O}/>
          </svg>
          <div class="search">
            <span class="corner"></span>
            <input value="Buscar" />
            <svg width="17" height="17" viewBox="0 0 17 17">
              <path d="M9 9l-6 6" stroke="#9fb0c4" stroke-width="2.500" transform="translate(1 1)"/>
              <path d="M8 8L2 14l1 2 2-1 1-2 2-1 1-2" fill="#fbc060" stroke=${O}/>
              <circle cx="11" cy="5.500" r="4" fill="#fff" stroke=${O} stroke-width="2"/>
            </svg>
          </div>
        </div>

        <div class="notice">
          <div><i></i>Share your experiences using BSCW in our new <b>BSCW best practices blog</b> (english version)</div>
          <div><i></i>Diskutieren Sie mit uns Ihre Erfahrungen und Tipps zur <b>BSCW-Nutzung im Blog</b> (deutsche Version)</div>
        </div>

        <div class="bar"></div>
        <div class="tools">
          ${tools.map(t => html`<span>${ic(24, 22, t)}</span>`)}
          <span class="filter">Sin Filtro</span>
        </div>

        <div class="group">
          <div class="orange"></div>
          <svg class="gi" width="18" height="16" viewBox="0 0 18 16">
            <path d="M1.500 13V1.500h6l2 2h5V6" fill="#b0bcc8" stroke="#7c8a98"/>
            <path d="M1.500 15l2-9h14l-2 9z" fill="#a8c4de" stroke="#6f8296"/>
          </svg>
          <b>Grupo de formación</b>
          <div class="total">un total de<br />10 entradas</div>
          <div class="down"></div>
        </div>

        <div class="thead">
          <div class="orange"></div>
          <div class="blank"></div>
          <div><div class="sort"></div></div>
          <div><u>Nombre</u></div>
          <div>Acción</div>
          <div class="mid"><u>Tamaño</u></div>
          <div><u>Calificación</u></div>
          <div>Creador</div>
          <div><u>Prioridad</u></div>
          <div><u>Última Modificación</u></div>
          <div>Sucesos</div>
        </div>

        ${rows.map(r => this.renderRow(r))}
      </div>
    `;
  }
}
